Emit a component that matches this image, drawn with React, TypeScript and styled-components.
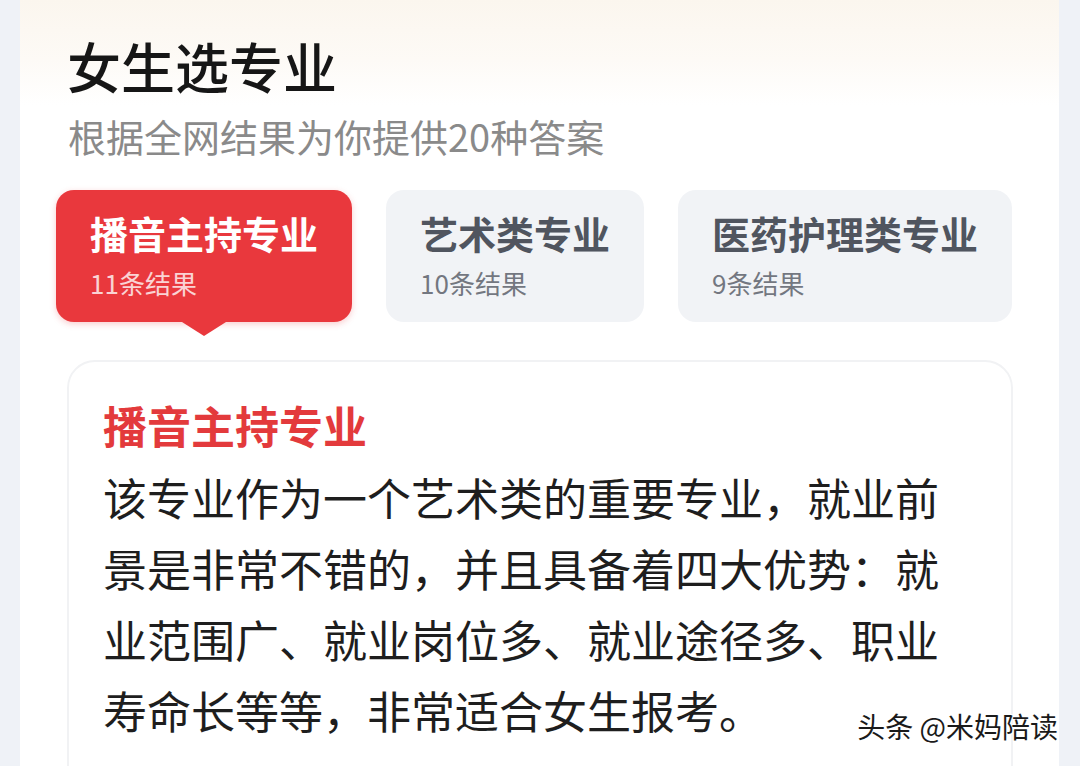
import React, { useState } from "react";
import styled, { createGlobalStyle } from "styled-components";

const GlobalStyle = createGlobalStyle`
	html, body {
		margin: 0;
		padding: 0;
		background: #eff2f7;
		font-family: "Noto Sans CJK SC", "Noto Sans", sans-serif;
	}
	* {
		box-sizing: border-box;
	}
`;

interface Tab {
	name: string;
	count: number;
}

const tabs: Tab[] = [
	{ name: "播音主持专业", count: 11 },
	{ name: "艺术类专业", count: 10 },
	{ name: "医药护理类专业", count: 9 },
];

const BODY = "该专业作为一个艺术类的重要专业，就业前景是非常不错的，并且具备着四大优势：就业范围广、就业岗位多、就业途径多、职业寿命长等等，非常适合女生报考。";

export default function App() {
	const [active, setActive] = useState(0);

	return (
		<>
			<GlobalStyle />
			<Page>
				<Panel>
					<Title>女生选专业</Title>
					<Subtitle>根据全网结果为你提供20种答案</Subtitle>
					<TabRow>
						{tabs.map((tab, i) => (
							<TabButton key={tab.name} active={i === active} onClick={() => setActive(i)}>
								<TabName>{tab.name}</TabName>
								<TabCount>{tab.count}条结果</TabCount>
							</TabButton>
						))}
					</TabRow>
					<Card>
						<CardTitle>{tabs[active].name}</CardTitle>
						<CardBody>{BODY}</CardBody>
					</Card>
				</Panel>
				<Watermark>头条 @米妈陪读</Watermark>
			</Page>
		</>
	);
}

const Page = styled.div`
	position: relative;
	width: 1080px;
	height: 766px;
	overflow: hidden;
	padding: 0 21px 0 20px;
`;

const Panel = styled.div`
	height: 100%;
	background: linear-gradient(180deg, #fbf6ee 0px, #fdfaf6 60px, #ffffff 105px);
	padding: 36px 0 0 36px;
`;

const Title = styled.h1`
	margin: 0 0 0 11px;
	font-size: 54px;
	line-height: 60px;
	font-weight: 500;
	color: #161616;
`;

const Subtitle = styled.p`
	margin: 18px 0 0 12px;
	font-size: 38px;
	line-height: 44px;
	color: #8a8a8a;
	font-weight: 400;
`;

const TabRow = styled.div`
	display: flex;
	gap: 34px;
	margin-top: 32px;
`;

const TabButton = styled.button<{ active: boolean }>`
	position: relative;
	display: flex;
	flex-direction: column;
	align-items: flex-start;
	height: 132px;
	padding: 20px 34px 0;
	border: none;
	border-radius: 18px;
	font-family: inherit;
	text-align: left;
	cursor: pointer;
	background: ${(p) => (p.active ? "#e9383d" : "#f1f3f6")};
	color: ${(p) => (p.active ? "#ffffff" : "#50555f")};
	box-shadow: ${(p) => (p.active ? "0 2px 6px rgba(233, 56, 61, 0.25)" : "none")};

	&::after {
		content: "";
		display: ${(p) => (p.active ? "block" : "none")};
		position: absolute;
		left: 50%;
		bottom: -14px;
		transform: translateX(-50%);
		border-left: 22px solid transparent;
		border-right: 22px solid transparent;
		border-top: 14px solid #e9383d;
	}
`;

const TabName = styled.span`
	font-size: 38px;
	line-height: 46px;
	font-weight: 700;
	white-space: nowrap;
`;

const TabCount = styled.span`
	margin-top: 10px;
	font-size: 26px;
	line-height: 34px;
	opacity: 0.78;
	white-space: nowrap;
`;

const Card = styled.div`
	margin: 38px 0 0 11px;
	width: 946px;
	height: 500px;
	border: 2px solid #f1f2f4;
	border-radius: 28px;
	padding: 36px 58px 0 34px;
`;

const CardTitle = styled.h2`
	margin: 0;
	font-size: 44px;
	line-height: 54px;
	font-weight: 700;
	color: #e33a3c;
`;

const CardBody = styled.p`
	margin: 10px 0 0;
	font-size: 44px;
	line-height: 71px;
	color: #1e1e1e;
	font-weight: 400;
`;

const Watermark = styled.div`
	position: absolute;
	right: 22px;
	bottom: 22px;
	font-size: 28px;
	line-height: 36px;
	color: #1a1a1a;
	text-shadow: -1px -1px 0 #fff, 1px 1px 0 #fff, 1px -1px 0 #fff, -1px 1px 0 #fff;
`;
